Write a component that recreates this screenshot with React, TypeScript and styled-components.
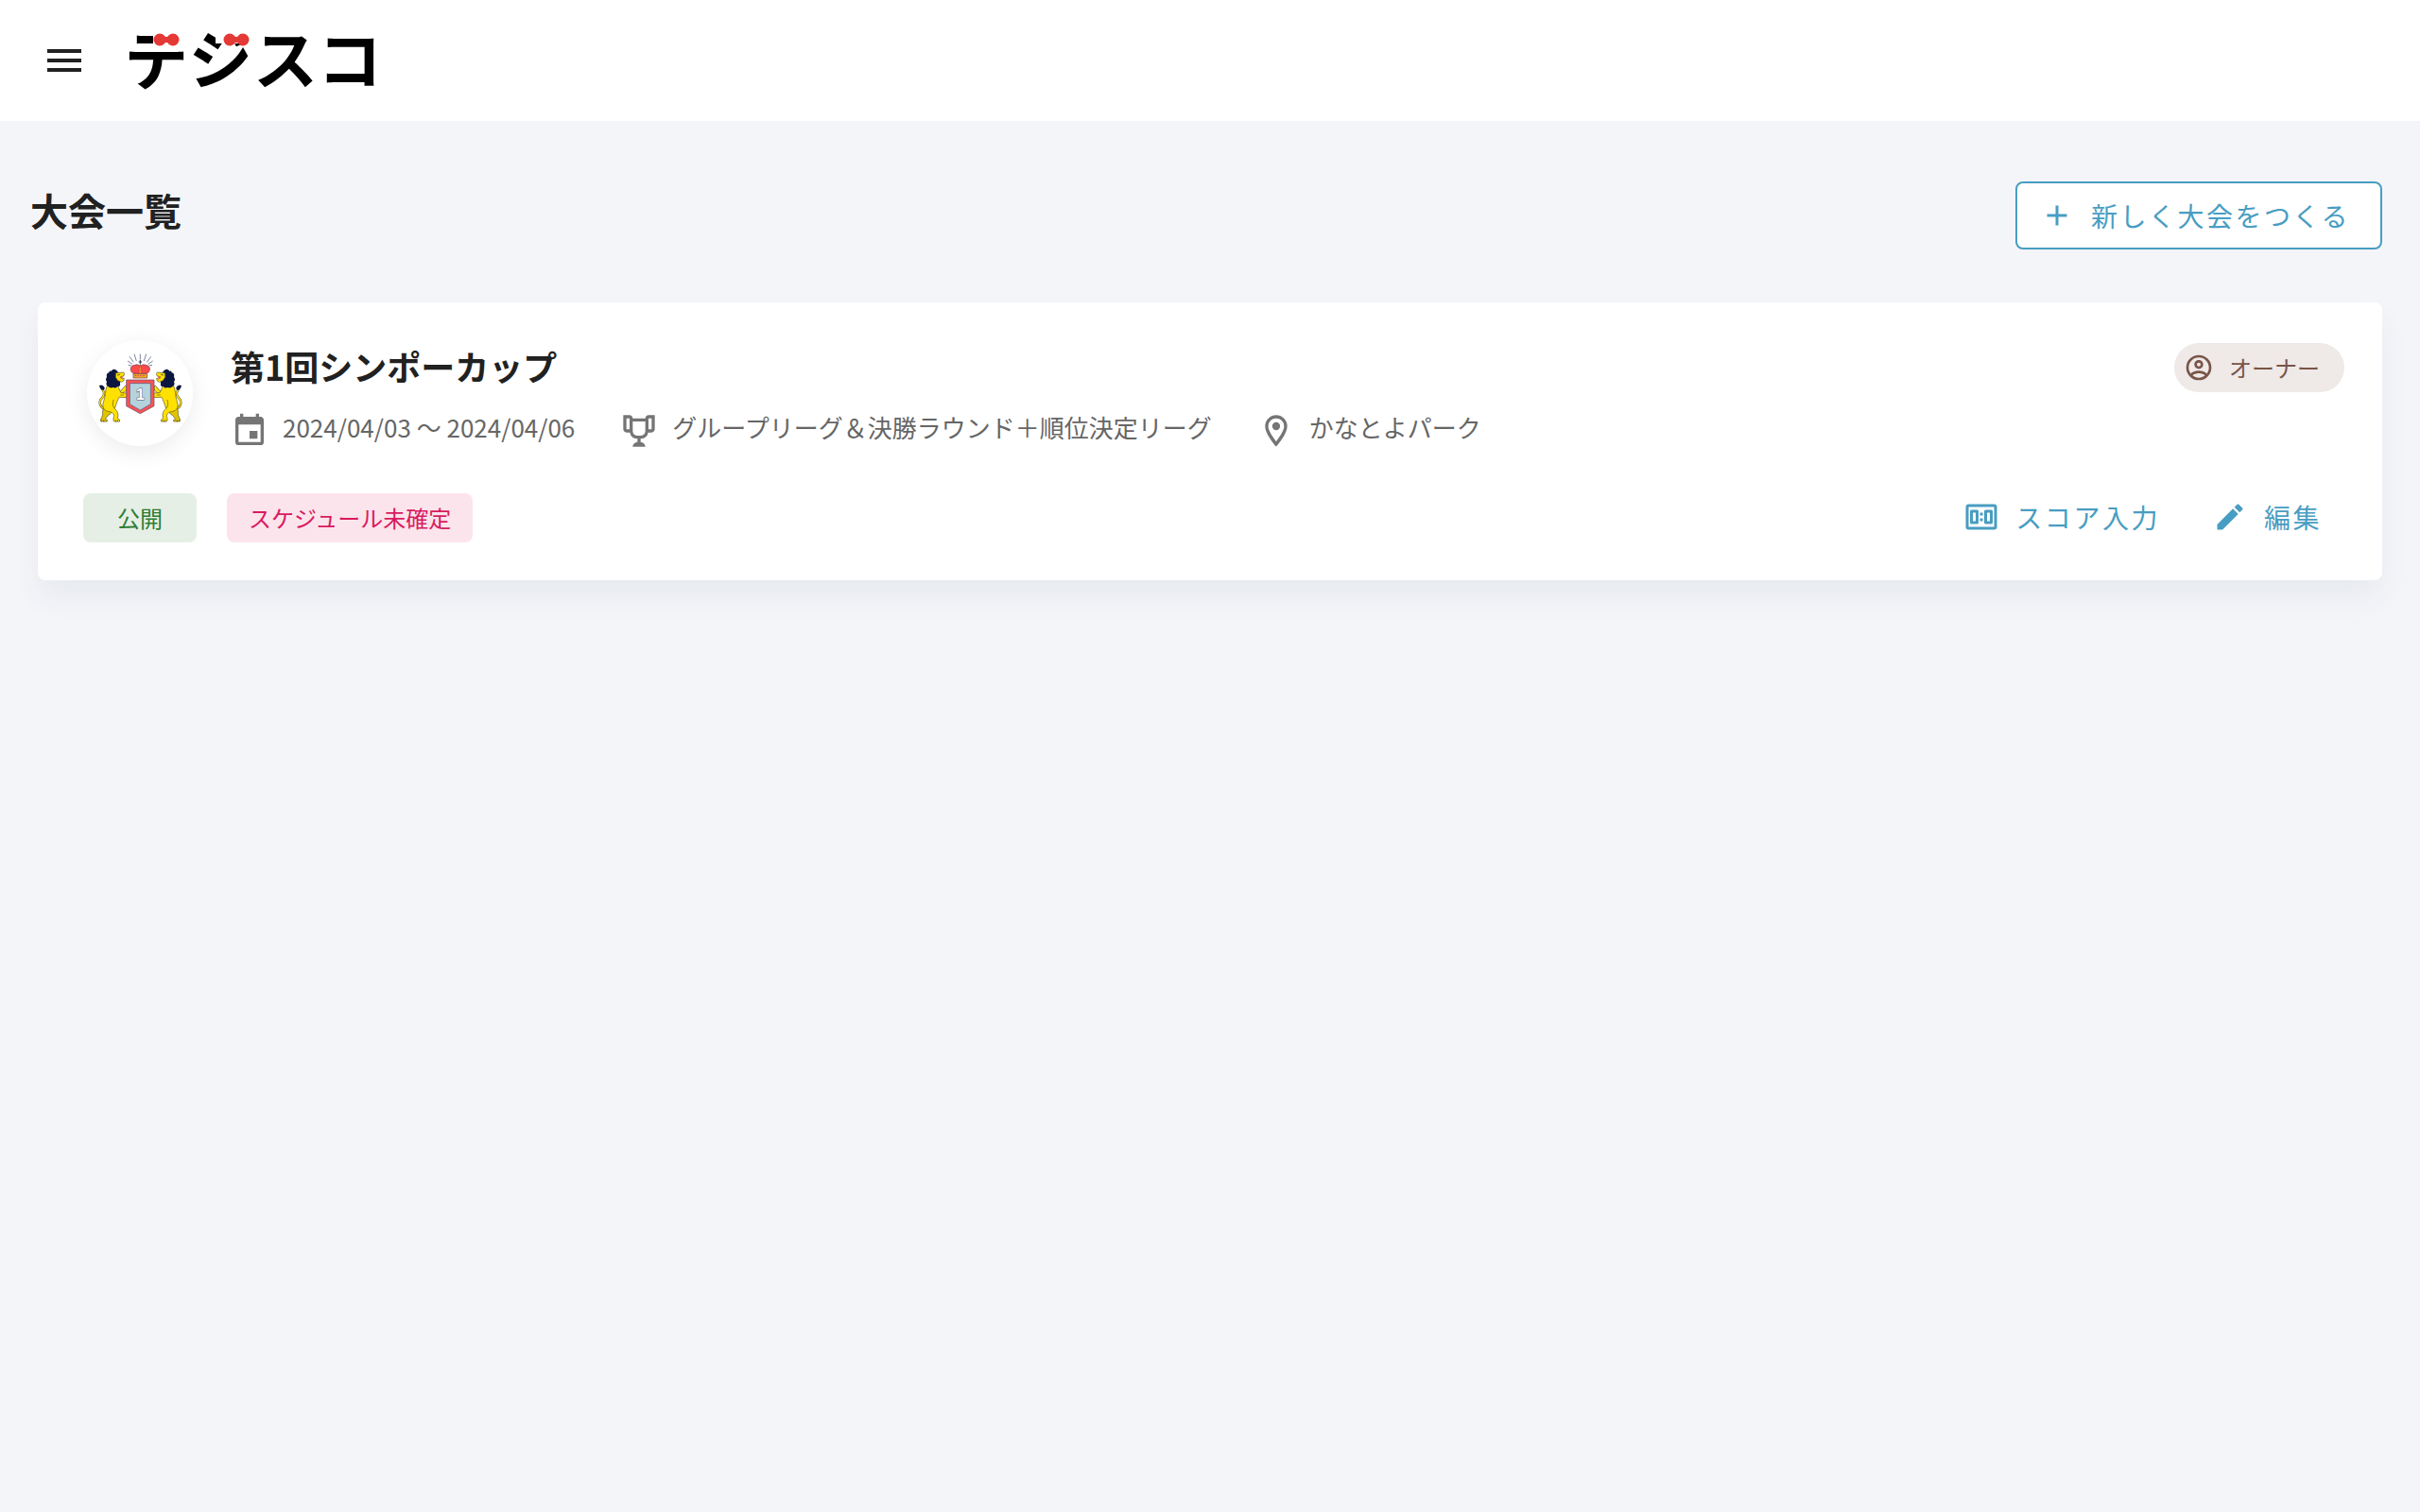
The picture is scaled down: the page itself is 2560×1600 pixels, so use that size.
import React from "react";
import styled, { createGlobalStyle } from "styled-components";

const GlobalStyle = createGlobalStyle`
  *, *::before, *::after { box-sizing: border-box; }
  html { background: #f4f5f9; }
  body {
    margin: 0;
    color: #212121;
    font-family: "Noto Sans CJK JP", "Noto Sans", sans-serif;
    font-size: 28px;
  }
  h1, h2, p, ul { margin: 0; padding: 0; }
  button { font: inherit; cursor: pointer; }
`;

const icons = {
  menu: "M3,6H21V8H3V6M3,11H21V13H3V11M3,16H21V18H3V16Z",
  plus: "M19,13H13V19H11V13H5V11H11V5H13V11H19V13Z",
  calendar:
    "M19,19H5V8H19M16,1V3H8V1H6V3H5C3.89,3 3,3.89 3,5V19A2,2 0 0,0 5,21H19A2,2 0 0,0 21,19V5C21,3.89 20.1,3 19,3H18V1M17,12H12V17H17V12Z",
  trophy:
    "M18 2C17.1 2 16 3 16 4H8C8 3 6.9 2 6 2H2V11C2 12 3 13 4 13H6.2C6.6 15 7.9 16.7 11 17V19.08C8 19.54 8 22 8 22H16C16 22 16 19.54 13 19.08V17C16.1 16.7 17.4 15 17.8 13H20C21 13 22 12 22 11V2H18M6 11H4V4H6V11M16 11.5C16 13.43 15.42 15 12 15C8.59 15 8 13.43 8 11.5V6H16V11.5M20 11H18V4H20V11Z",
  marker:
    "M12,6.5A2.5,2.5 0 0,1 14.5,9A2.5,2.5 0 0,1 12,11.5A2.5,2.5 0 0,1 9.5,9A2.5,2.5 0 0,1 12,6.5M12,2A7,7 0 0,1 19,9C19,14.25 12,22 12,22C12,22 5,14.25 5,9A7,7 0 0,1 12,2M12,4A5,5 0 0,0 7,9C7,10 7,12 12,18.71C17,12 17,10 17,9A5,5 0 0,0 12,4Z",
  pencil:
    "M20.71,7.04C21.1,6.65 21.1,6 20.71,5.63L18.37,3.29C18,2.9 17.35,2.9 16.96,3.29L15.12,5.12L18.87,8.87M3,17.25V21H6.75L17.81,9.93L14.06,6.18L3,17.25Z",
  account:
    "M12,2A10,10 0 0,0 2,12A10,10 0 0,0 12,22A10,10 0 0,0 22,12A10,10 0 0,0 12,2M7.07,18.28C7.5,17.38 10.12,16.5 12,16.5C13.88,16.5 16.5,17.38 16.93,18.28C15.57,19.36 13.86,20 12,20C10.14,20 8.43,19.36 7.07,18.28M18.36,16.83C16.93,15.09 13.46,14.5 12,14.5C10.54,14.5 7.07,15.09 5.64,16.83C4.62,15.5 4,13.82 4,12C4,7.59 7.59,4 12,4C16.41,4 20,7.59 20,12C20,13.82 19.38,15.5 18.36,16.83M12,6C10.06,6 8.5,7.56 8.5,9.5C8.5,11.44 10.06,13 12,13C13.94,13 15.5,11.44 15.5,9.5C15.5,7.56 13.94,6 12,6M12,11A1.5,1.5 0 0,1 10.5,9.5A1.5,1.5 0 0,1 12,8A1.5,1.5 0 0,1 13.5,9.5A1.5,1.5 0 0,1 12,11Z",
  scoreboard:
    "M3,3H21A2,2 0 0,1 23,5V19A2,2 0 0,1 21,21H3A2,2 0 0,1 1,19V5A2,2 0 0,1 3,3M3,5V19H21V5H3M5,7H9A1,1 0 0,1 10,8V16A1,1 0 0,1 9,17H5A1,1 0 0,1 4,16V8A1,1 0 0,1 5,7M6,9V15H8V9H6M15,7H19A1,1 0 0,1 20,8V16A1,1 0 0,1 19,17H15A1,1 0 0,1 14,16V8A1,1 0 0,1 15,7M16,9V15H18V9H16M11,9H13V11H11V9M11,13H13V15H11V13Z",
};

const IconSvg = styled.svg<{ $size: number }>`
  display: block;
  flex: none;
  width: ${(p) => p.$size}px;
  height: ${(p) => p.$size}px;
  fill: currentColor;
`;

function Icon({ name, size }: { name: keyof typeof icons; size: number }) {
  return (
    <IconSvg $size={size} viewBox="0 0 24 24" aria-hidden="true">
      <path fillRule="evenodd" d={icons[name]} />
    </IconSvg>
  );
}

const AppBar = styled.header`
  display: flex;
  align-items: center;
  gap: 24px;
  height: 128px;
  padding: 0 32px;
  background: #fff;
`;

const MenuButton = styled.button`
  display: grid;
  place-items: center;
  padding: 12px;
  border: 0;
  border-radius: 50%;
  background: transparent;
  color: #212121;
`;

const LogoLink = styled.a`
  display: block;
`;

const LogoSvg = styled.svg`
  display: block;
  width: 284px;
  height: 96px;
`;

const LogoText = styled.text`
  font-family: "Noto Sans CJK JP", sans-serif;
  font-size: 68px;
  font-weight: 700;
  fill: #000;
`;

function Ribbon({ x, y }: { x: number; y: number }) {
  return (
    <g transform={`translate(${x} ${y})`} fill="#e53935">
      <circle cx={-7} r={6.5} />
      <circle cx={7} r={6.5} />
      <path d="M-5-5Q0-1 5-5V5Q0 1-5 5Z" />
    </g>
  );
}

function Logo() {
  return (
    <LogoSvg viewBox="0 0 284 96">
      <mask id="ribbon-space" maskUnits="userSpaceOnUse" x="0" y="0" width="284" height="96">
        <rect width="284" height="96" fill="#fff" />
        <rect x="34" y="0" width="38" height="32" />
        <rect x="100" y="0" width="39" height="30" />
      </mask>
      <g mask="url(#ribbon-space)">
        <LogoText x={4} y={73}>
          デジスコ
        </LogoText>
      </g>
      <Ribbon x={48} y={26} />
      <Ribbon x={122} y={26} />
    </LogoSvg>
  );
}

const Page = styled.main`
  padding: 64px 40px;
`;

const PageHead = styled.div`
  display: flex;
  align-items: center;
  justify-content: space-between;
  margin: 0 0 56px -8px;
`;

const PageTitle = styled.h1`
  padding-bottom: 12px;
  font-size: 40px;
  font-weight: 700;
  line-height: 60px;
`;

const ActionButton = styled.button<{ $outlined?: boolean }>`
  display: flex;
  align-items: center;
  gap: 18px;
  height: ${(p) => (p.$outlined ? 72 : 52)}px;
  padding: ${(p) => (p.$outlined ? "0 32px 0 24px" : "0 24px 2px")};
  border: ${(p) => (p.$outlined ? "2px solid #489dc2" : "0")};
  border-radius: 8px;
  background: #fff;
  color: #489dc2;
  font-size: 28px;
  line-height: 40px;
  letter-spacing: 0.09em;
  white-space: nowrap;
`;

const Card = styled.article`
  padding: 40px 40px 40px 48px;
  border-radius: 8px;
  background: #fff;
  box-shadow: 0 18px 30px rgba(40, 60, 80, 0.06);
`;

const CardTop = styled.div`
  display: flex;
  align-items: flex-start;
  gap: 40px;
  padding-left: 4px;
`;

const Avatar = styled.div`
  flex: none;
  width: 112px;
  height: 112px;
  border-radius: 50%;
  background: #fff;
  box-shadow: 0 6px 24px rgba(0, 0, 0, 0.08);
`;

const CrestSvg = styled.svg`
  display: block;
  width: 112px;
  height: 112px;
`;

const CrestNumber = styled.text`
  font-family: "Liberation Sans", Arial, sans-serif;
  font-size: 48px;
  font-weight: 700;
  fill: #fff;
  stroke: #4a5a7c;
  stroke-width: 3;
  paint-order: stroke;
`;

function Lion() {
  return (
    <g strokeLinejoin="round" strokeLinecap="round">
      <path d="M153 280C132 268 134 252 145 242C155 232 150 222 143 214" fill="none" stroke="#5b5320" strokeWidth="7" />
      <path d="M153 280C132 268 134 252 145 242C155 232 150 222 143 214" fill="none" stroke="#ffe100" strokeWidth="4" />
      <path d="M135 204Q145 200 152 210Q153 217 147 219Q137 216 135 204Z" fill="#0b1740" />
      <g fill="#ffe100" stroke="#5b5320" strokeWidth="2">
        <path d="M178 212L202 222L218 204L222 206V219L204 232L182 228Z" />
        <path d="M150 276C142 286 148 292 145 300L139 313Q138 318 144 318H160V313L154 311C160 298 170 296 176 288Z" fill="#e0c400" />
        <path d="M160 205C152 222 156 236 149 254C141 276 154 286 169 287C181 291 184 298 180 308Q178 318 184 318H200Q202 311 193 308C198 294 192 284 184 277C190 262 192 250 198 241L224 242Q232 235 225 228L204 227L194 206Z" />
      </g>
      <path d="M173 158Q180 148 190 156Q199 164 195 172L197 180Q204 188 201 198Q203 208 193 207Q188 214 179 210Q168 214 161 205Q155 200 159 192Q153 184 159 178Q156 165 166 163Q166 156 173 158Z" fill="#0b1740" />
      <path d="M188 164L212 162Q217 166 213 173L201 177L206 183L214 181Q215 190 206 193L194 188L187 178Z" fill="#ffe100" stroke="#5b5320" strokeWidth="2" />
      <path d="M193 171L200 169" stroke="#0b1740" strokeWidth="2" />
      <path d="M202 177L212 175L207 182Z" fill="#fa5252" />
      <path d="M203 234H212M142 314V318M149 314V318M187 314V318M193 314V318M180 250Q174 266 183 276" fill="none" stroke="#5b5320" strokeWidth="2" />
    </g>
  );
}

function Crest() {
  return (
    <CrestSvg viewBox="96 60 336 336" role="img" aria-label="第1回シンポーカップ">
      <path
        d="M265 122V104M253 126L246 104M277 126L284 104M244 130L231 112M286 130L299 112M240 136L225 126M290 136L305 126M238 141L227 139M292 141L303 139"
        stroke="#3a466b"
        strokeWidth="2"
        fill="none"
      />
      <Lion />
      <g transform="translate(531 0) scale(-1 1)">
        <Lion />
      </g>
      <path d="M221 186H309V269L265 293L221 269Z" fill="#fa5252" stroke="#5c4a68" strokeWidth="2" />
      <path d="M232 197H298V263L265 282L232 263Z" fill="#b5d3dd" stroke="#4a5a7c" strokeWidth="2" />
      <CrestNumber x={265} y={249} textAnchor="middle">
        1
      </CrestNumber>
      <path d="M244 166C230 158 232 142 247 139Q257 134 265 142Q273 134 283 139C298 142 300 158 286 166Z" fill="#fa4b4b" stroke="#743040" strokeWidth="2" />
      <path d="M261 166Q260 150 265 138Q270 150 269 166Z" fill="#fa8a3c" stroke="#743040" strokeWidth="1" />
      <path d="M243 167H287V180H243Z" fill="#f0b429" stroke="#743040" strokeWidth="2" />
      <path d="M248 173H282" stroke="#e5484d" strokeWidth="4" strokeDasharray="5 3" />
      <path d="M265 123V137M260 129H270" stroke="#26335c" strokeWidth="3" />
    </CrestSvg>
  );
}

const Summary = styled.div`
  display: flex;
  flex: 1;
  flex-direction: column;
  gap: 18px;
  min-width: 0;
`;

const CardTitle = styled.h2`
  font-size: 36px;
  font-weight: 700;
  line-height: 54px;
`;

const MetaList = styled.ul`
  display: flex;
  flex-wrap: wrap;
  gap: 8px 48px;
  list-style: none;
`;

const MetaItem = styled.li`
  display: flex;
  align-items: flex-end;
  gap: 15px;
  color: #757575;
`;

const MetaText = styled.span`
  padding-bottom: 4px;
  color: #666;
  font-size: 26px;
  line-height: 40px;
`;

const OwnerBadge = styled.span`
  display: flex;
  flex: none;
  align-items: center;
  gap: 16px;
  height: 52px;
  margin-top: 3px;
  padding: 0 26px 0 10px;
  border-radius: 26px;
  background: #efe9e8;
  color: #795548;
  font-size: 24px;
  line-height: 32px;
`;

const CardBottom = styled.div`
  display: flex;
  align-items: center;
  justify-content: space-between;
  margin-top: 46px;
`;

const Group = styled.div<{ $gap: number }>`
  display: flex;
  align-items: center;
  gap: ${(p) => p.$gap}px;
`;

const Chip = styled.span<{ $tone: "green" | "pink" }>`
  display: flex;
  align-items: center;
  justify-content: center;
  min-width: 120px;
  height: 52px;
  padding: 0 23px;
  border-radius: 8px;
  background: ${(p) => (p.$tone === "green" ? "#e6efe6" : "#fce4ec")};
  color: ${(p) => (p.$tone === "green" ? "#2e7d32" : "#d81b60")};
  font-size: 24px;
  line-height: 32px;
`;

const details: { icon: keyof typeof icons; text: string }[] = [
  { icon: "calendar", text: "2024/04/03 〜 2024/04/06" },
  { icon: "trophy", text: "グループリーグ＆決勝ラウンド＋順位決定リーグ" },
  { icon: "marker", text: "かなとよパーク" },
];

export default function App() {
  return (
    <>
      <GlobalStyle />
      <AppBar>
        <MenuButton type="button" aria-label="メニュー">
          <Icon name="menu" size={48} />
        </MenuButton>
        <LogoLink href="#" aria-label="デジスコ">
          <Logo />
        </LogoLink>
      </AppBar>
      <Page>
        <PageHead>
          <PageTitle>大会一覧</PageTitle>
          <ActionButton type="button" $outlined>
            <Icon name="plus" size={36} />
            新しく大会をつくる
          </ActionButton>
        </PageHead>
        <Card>
          <CardTop>
            <Avatar>
              <Crest />
            </Avatar>
            <Summary>
              <CardTitle>第1回シンポーカップ</CardTitle>
              <MetaList>
                {details.map((d) => (
                  <MetaItem key={d.icon}>
                    <Icon name={d.icon} size={40} />
                    <MetaText>{d.text}</MetaText>
                  </MetaItem>
                ))}
              </MetaList>
            </Summary>
            <OwnerBadge>
              <Icon name="account" size={32} />
              オーナー
            </OwnerBadge>
          </CardTop>
          <CardBottom>
            <Group $gap={32}>
              <Chip $tone="green">公開</Chip>
              <Chip $tone="pink">スケジュール未確定</Chip>
            </Group>
            <Group $gap={8}>
              <ActionButton type="button">
                <Icon name="scoreboard" size={36} />
                スコア入力
              </ActionButton>
              <ActionButton type="button">
                <Icon name="pencil" size={36} />
                編集
              </ActionButton>
            </Group>
          </CardBottom>
        </Card>
      </Page>
    </>
  );
}
